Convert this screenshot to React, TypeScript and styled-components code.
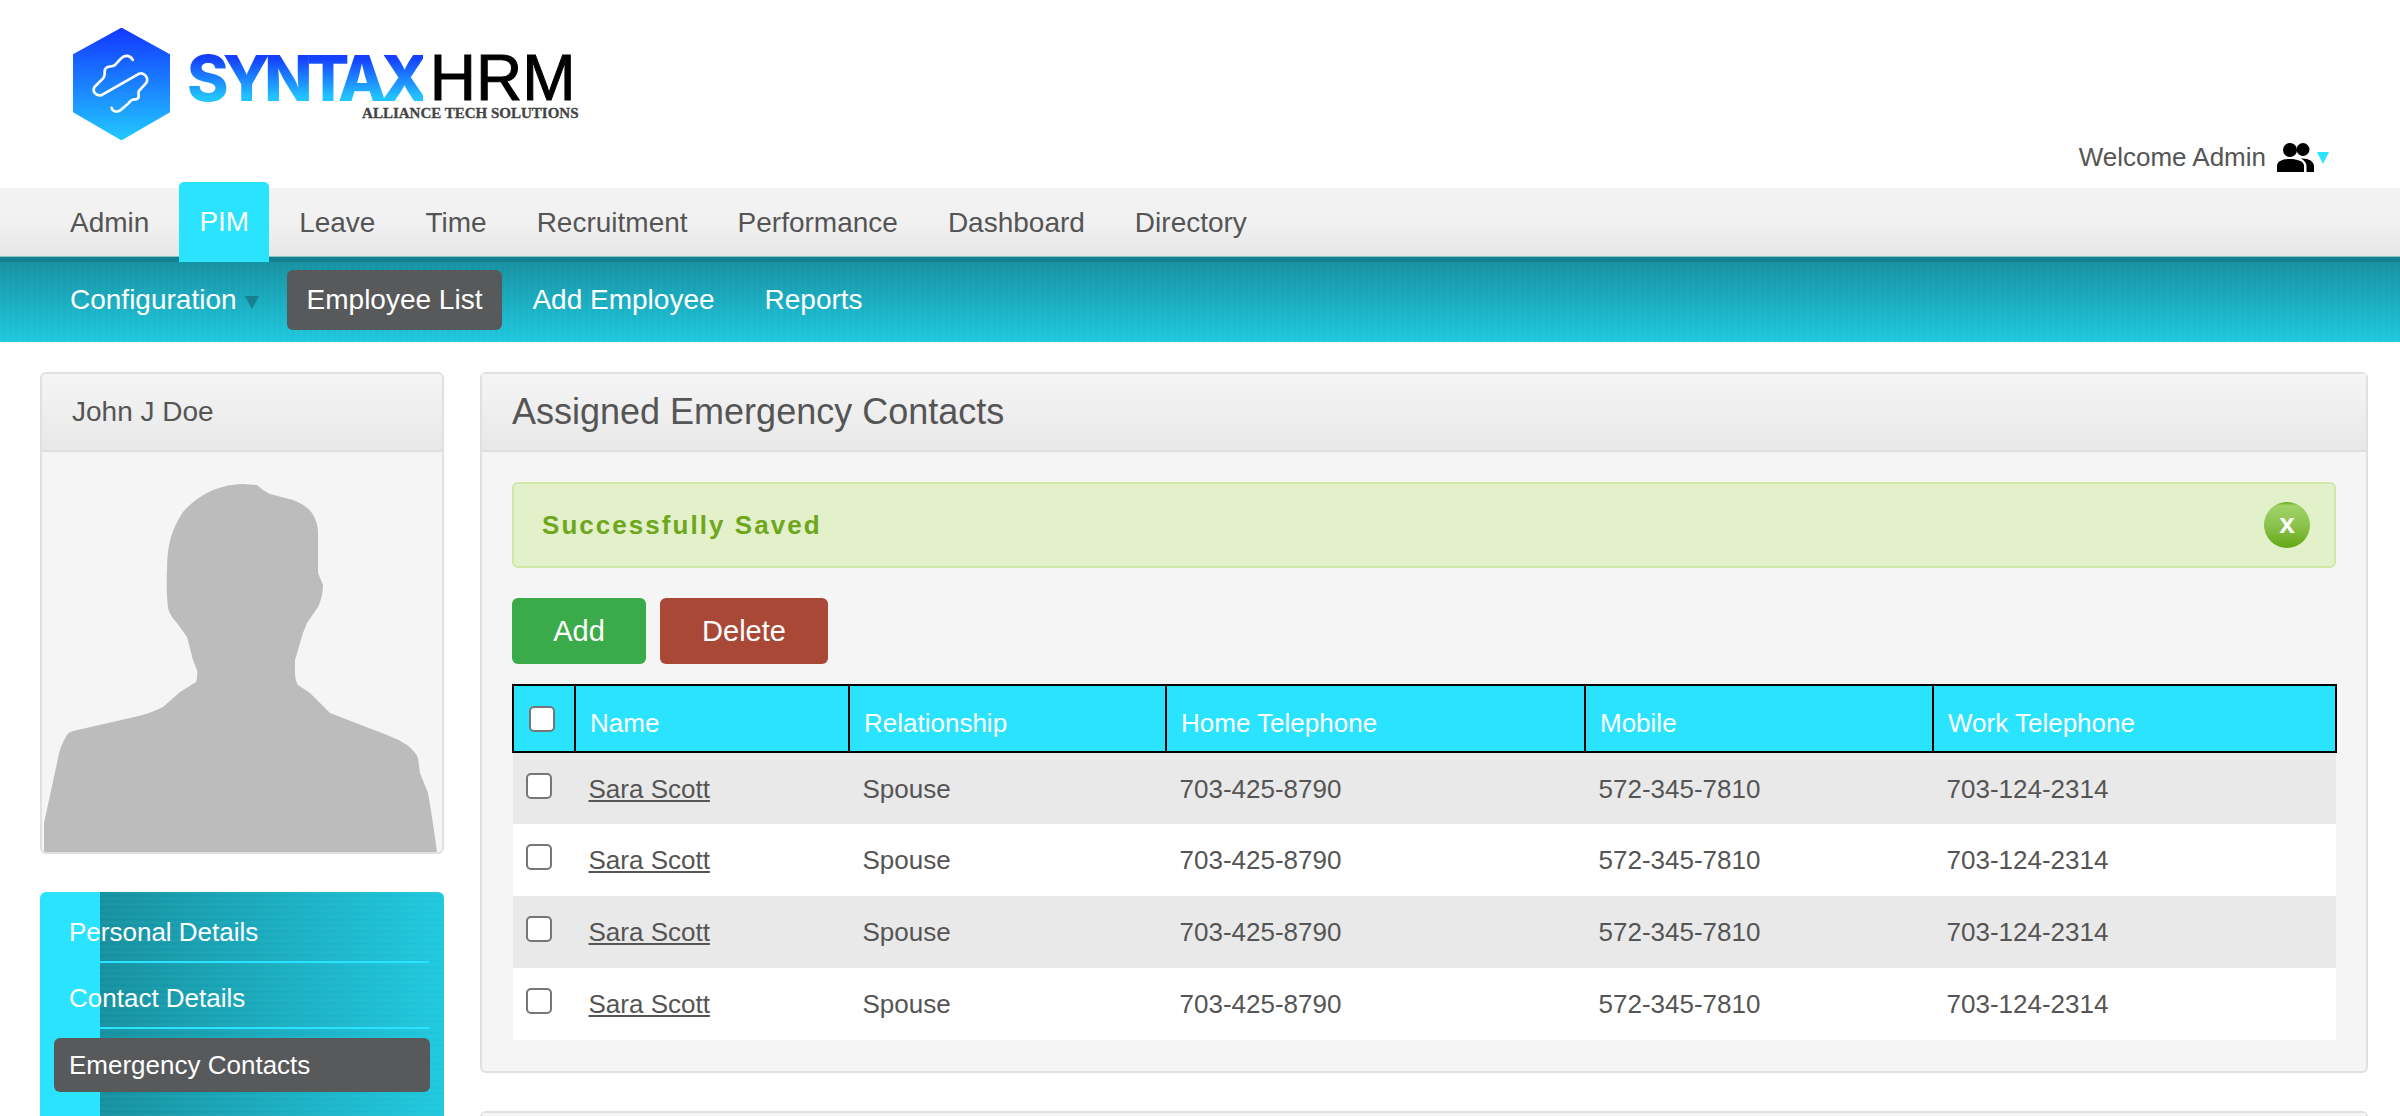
import styled, { createGlobalStyle } from 'styled-components';

const tabs = ['Admin', 'PIM', 'Leave', 'Time', 'Recruitment', 'Performance', 'Dashboard', 'Directory'];
const contacts = [1, 2, 3, 4];

const GlobalStyle = createGlobalStyle`
    html, body {
        margin: 0;
        background: #fff;
        font-family: "Liberation Sans", Arial, sans-serif;
        color: #555;
    }
    * {
        box-sizing: border-box;
    }
`;

const Page = styled.div`
    height: 100vh;
    overflow: hidden;
`;

const Header = styled.header`
    height: 188px;
    display: flex;
    justify-content: space-between;
    padding: 28px 73px 0 73px;
`;

const Logo = styled.div`
    display: flex;
    gap: 17px;
    height: 112px;
`;

const LogoText = styled.div`
    padding-top: 22px;
    display: flex;
    flex-direction: column;
`;

const LogoName = styled.div`
    display: flex;
    font-size: 63px;
    line-height: 56px;
`;

const Syntax = styled.span`
    font-family: Inter, "Liberation Sans", sans-serif;
    font-weight: 800;
    letter-spacing: -5.8px;
    margin-right: 7px;
    background: linear-gradient(180deg, #1540ff 15%, #22c4ff 85%);
    -webkit-background-clip: text;
    background-clip: text;
    color: transparent;
`;

const Hrm = styled.span`
    color: #000;
    font-size: 64px;
    -webkit-text-stroke: 1px #000;
`;

const Tagline = styled.div`
    align-self: flex-end;
    margin: 0 -3px 0 0;
    font-family: "Liberation Serif", serif;
    font-size: 15px;
    line-height: 14px;
    font-weight: 700;
    letter-spacing: 0;
    color: #444;
    -webkit-text-stroke: 0.3px #444;
`;

const Welcome = styled.div`
    display: flex;
    align-items: center;
    height: 30px;
    margin-top: 114px;
    font-size: 26px;
    color: #555;
`;

const PeopleIcon = styled.svg`
    width: 37px;
    height: 29px;
    margin-left: 11px;
`;

const WelcomeCaret = styled.span`
    width: 0;
    height: 0;
    margin: 2px -2px 0 3px;
    border-left: 6px solid transparent;
    border-right: 6px solid transparent;
    border-top: 12px solid #29e3ff;
`;

const MainNav = styled.nav`
    height: 74px;
    display: flex;
    padding-left: 45px;
    background: linear-gradient(180deg, #f3f3f3 0, #f1f1f1 34px, #e6e6e6 68px, #8fc4c9 68px, #8fc4c9 69px, #15808f 69px, #15808f 74px);
`;

const Tab = styled.div<{ $active?: boolean }>`
    height: ${p => (p.$active ? '80px' : '68px')};
    margin: ${p => (p.$active ? '-6px 5px 0' : '0 5px')};
    padding: ${p => (p.$active ? '7px 20px 0' : '1px 20px 0')};
    display: flex;
    align-items: ${p => (p.$active ? 'flex-start' : 'center')};
    line-height: ${p => (p.$active ? '66px' : 'normal')};
    font-size: 28px;
    color: ${p => (p.$active ? '#fff' : '#555')};
    background: ${p => (p.$active ? '#29e3ff' : 'transparent')};
    border-radius: ${p => (p.$active ? '5px 5px 0 0' : '0')};
    position: relative;
`;

const SubNav = styled.nav`
    height: 80px;
    padding: 8px 0 0 45px;
    display: flex;
    background:
        repeating-linear-gradient(90deg, rgba(255, 255, 255, 0.025) 0 3px, transparent 3px 6px),
        linear-gradient(180deg, #1691a2 0, #1ec8de 100%);
`;

const SubItem = styled.div<{ $active?: boolean }>`
    height: 60px;
    margin: 0 5px;
    padding: 0 20px;
    display: flex;
    align-items: center;
    font-size: 28px;
    color: #fff;
    background: ${p => (p.$active ? '#58595b' : 'transparent')};
    border-radius: 6px;
`;

const SubCaret = styled.span`
    width: 0;
    height: 0;
    margin: 4px -2px 0 8px;
    border-left: 7px solid transparent;
    border-right: 7px solid transparent;
    border-top: 13px solid #15808f;
`;

const Content = styled.main`
    display: flex;
    gap: 36px;
    padding: 30px 32px 0 40px;
`;

const Sidebar = styled.aside`
    width: 404px;
    flex: none;
    display: flex;
    flex-direction: column;
    gap: 38px;
`;

const ProfileCard = styled.section`
    border: 2px solid #e0e0e0;
    border-radius: 6px;
    overflow: hidden;
    background: #f5f5f5;
`;

const CardHead = styled.div`
    height: 78px;
    padding-left: 30px;
    display: flex;
    align-items: center;
    font-size: 28px;
    color: #555;
    background: linear-gradient(180deg, #f5f5f5, #e8e8e8);
    border-bottom: 2px solid #e0e0e0;
`;

const Avatar = styled.svg`
    display: block;
    width: 400px;
    height: 400px;
`;

const SideMenu = styled.div`
    height: 320px;
    padding: 7px 14px;
    border-radius: 6px 6px 0 0;
    background:
        linear-gradient(90deg, #29e3ff 0, #29e3ff 60px, transparent 60px),
        repeating-linear-gradient(0deg, rgba(255, 255, 255, 0.03) 0 3px, transparent 3px 6px),
        linear-gradient(90deg, #15909f 60px, #1fc8df 100%);
`;

const SideItem = styled.div<{ $active?: boolean }>`
    position: relative;
    height: ${p => (p.$active ? '54px' : '66px')};
    margin-top: ${p => (p.$active ? '7px' : '0')};
    padding-left: 15px;
    display: flex;
    align-items: center;
    font-size: 26px;
    color: #fff;
    background: ${p => (p.$active ? '#58595b' : 'transparent')};
    border-radius: 6px;

    ${p => !p.$active && `
        &::after {
            content: '';
            position: absolute;
            left: 46px;
            right: 0;
            bottom: 2px;
            height: 2px;
            background: #29e3ff;
            border-radius: 0 0 6px 0;
        }
    `}
`;

const MainColumn = styled.div`
    flex: 1;
    min-width: 0;
    display: flex;
    flex-direction: column;
    gap: 38px;
`;

const Panel = styled.section`
    border: 2px solid #e0e0e0;
    border-radius: 6px;
    background: #f5f5f5;
`;

const PanelHead = styled.div`
    height: 78px;
    padding-left: 30px;
    display: flex;
    align-items: center;
    font-size: 36px;
    color: #555;
    background: linear-gradient(180deg, #f5f5f5, #e8e8e8);
    border-bottom: 2px solid #e0e0e0;
`;

const PanelBody = styled.div`
    padding: 30px 30px 31px;
`;

const Alert = styled.div`
    height: 86px;
    padding: 0 24px 0 28px;
    display: flex;
    align-items: center;
    justify-content: space-between;
    background: #e2f1c9;
    border: 2px solid #cde9a5;
    border-radius: 6px;
    font-size: 26px;
    font-weight: 700;
    letter-spacing: 2.05px;
    color: #6ea61c;
`;

const AlertClose = styled.span`
    width: 46px;
    height: 46px;
    padding-bottom: 3px;
    display: flex;
    align-items: center;
    justify-content: center;
    border-radius: 50%;
    background: linear-gradient(180deg, #62a715 0, #a0d268 8%, #8cc44e 50%, #62a715 100%);
    color: #fff;
    font-size: 28px;
    letter-spacing: 0;
`;

const Actions = styled.div`
    display: flex;
    gap: 14px;
    margin: 30px 0 20px;
`;

const ActionButton = styled.button<{ $width: number; $color: string }>`
    width: ${p => p.$width}px;
    height: 66px;
    border: 0;
    border-radius: 6px;
    background: ${p => p.$color};
    color: #fff;
    font-family: inherit;
    font-size: 29px;
`;

const Table = styled.table`
    width: 1823px;
    table-layout: fixed;
    border-collapse: collapse;
    font-size: 26px;
`;

const Th = styled.th`
    height: 67px;
    padding: 10px 0 0 14px;
    text-align: left;
    font-weight: 400;
    color: #fff;
    background: #29e3ff;
    border: 2px solid #000;
`;

const CheckTh = styled(Th)`
    padding: 0 0 0 15px;
    vertical-align: middle;
`;

const Row = styled.tr`
    height: 72px;

    &:nth-child(odd) {
        background: #e9e9e9;
    }
    &:nth-child(even) {
        background: #fff;
    }
`;

const Td = styled.td`
    padding: 1px 0 0 13.5px;
    color: #555;
`;

const CheckTd = styled.td`
    padding: 20px 0 0 13px;
    vertical-align: top;
`;

const Check = styled.input.attrs({ type: 'checkbox' })`
    appearance: none;
    display: block;
    width: 26px;
    height: 26px;
    margin: 0;
    border: 2px solid #767676;
    border-radius: 5px;
    background: #fff;
`;

const NameLink = styled.a`
    color: #555;
    text-decoration: underline;
`;

const LogoMark = () => (
    <svg width="97" height="112" viewBox="70 55 292 335">
        <defs>
            <linearGradient id="hex" x1="0" y1="0" x2="0" y2="1">
                <stop offset="0" stopColor="#1238ff" />
                <stop offset="1" stopColor="#22c8ff" />
            </linearGradient>
        </defs>
        <path
            d="M216 55 L362 135 L362 305 L216 390 L70 305 L70 135 Z"
            fill="url(#hex)"
            stroke="url(#hex)"
            strokeWidth="4"
            strokeLinejoin="round"
        />
        <path
            d="M250 150 C242 135 226 134 214 146 L196 166 C186 172 176 168 170 174 C160 180 170 192 162 204 L136 230 C126 244 138 260 156 256 L268 192 C284 186 300 204 290 220 L268 244 C264 256 274 262 262 268 C250 270 246 268 238 280 L212 302 C200 310 188 304 186 294"
            fill="none"
            stroke="#fff"
            strokeWidth="8"
            strokeLinecap="round"
            strokeLinejoin="round"
        />
    </svg>
);

const App = () => {
    return (
        <Page>
            <GlobalStyle />
            <Header>
                <Logo>
                    <LogoMark />
                    <LogoText>
                        <LogoName>
                            <Syntax>SYNTAX</Syntax>
                            <Hrm>HRM</Hrm>
                        </LogoName>
                        <Tagline>ALLIANCE TECH SOLUTIONS</Tagline>
                    </LogoText>
                </Logo>
                <Welcome>
                    Welcome Admin
                    <PeopleIcon viewBox="0 0 37 29">
                        <circle cx="13" cy="7" r="7" />
                        <circle cx="26" cy="6.5" r="6.5" />
                        <path d="M0 29 V23 C0 18 6 16 13 16 C20 16 27 18 27 23 V29 Z" />
                        <path d="M24 15.5 C31 15 37 18 37 23 V29 H29.5 V23 C29.5 20 27.5 17.5 24 15.5 Z" />
                    </PeopleIcon>
                    <WelcomeCaret />
                </Welcome>
            </Header>

            <MainNav>
                {tabs.map(tab => (
                    <Tab key={tab} $active={tab === 'PIM'}>{tab}</Tab>
                ))}
            </MainNav>
            <SubNav>
                <SubItem>Configuration<SubCaret /></SubItem>
                <SubItem $active>Employee List</SubItem>
                <SubItem>Add Employee</SubItem>
                <SubItem>Reports</SubItem>
            </SubNav>

            <Content>
                <Sidebar>
                    <ProfileCard>
                        <CardHead>John J Doe</CardHead>
                        <Avatar viewBox="42 452 400 400">
                            <path
                                fill="#bcbcbc"
                                d="M44 852 V823 L57 763 Q60 745 67 735 Q69 732 73 731 L130 718 Q150 714 163 707 L180 692 L196 682 Q198 675 197 670 L193 660 L187 637 L177 623 Q170 616 168 608 Q166 590 167 570 Q167 550 171 537 Q175 524 183 512 Q195 498 213 490 Q228 484 243 484 L257 485 Q262 490 270 494 L293 500 Q306 505 312 513 Q318 522 318 533 L318 573 L323 585 Q323 596 318 607 L307 623 L303 633 L295 660 L295 673 Q295 680 298 685 L310 693 L330 713 L387 735 Q398 739 407 745 Q415 751 418 758 L420 773 L428 793 Q432 815 437 852 Z"
                            />
                        </Avatar>
                    </ProfileCard>
                    <SideMenu>
                        <SideItem>Personal Details</SideItem>
                        <SideItem>Contact Details</SideItem>
                        <SideItem $active>Emergency Contacts</SideItem>
                    </SideMenu>
                </Sidebar>

                <MainColumn>
                    <Panel>
                        <PanelHead>Assigned Emergency Contacts</PanelHead>
                        <PanelBody>
                            <Alert>
                                Successfully Saved
                                <AlertClose>x</AlertClose>
                            </Alert>
                            <Actions>
                                <ActionButton $width={134} $color="#3bab4a">Add</ActionButton>
                                <ActionButton $width={168} $color="#a94836">Delete</ActionButton>
                            </Actions>
                            <Table>
                                <colgroup>
                                    <col width="62" />
                                    <col width="274" />
                                    <col width="317" />
                                    <col width="419" />
                                    <col width="348" />
                                    <col width="403" />
                                </colgroup>
                                <thead>
                                    <tr>
                                        <CheckTh><Check /></CheckTh>
                                        <Th>Name</Th>
                                        <Th>Relationship</Th>
                                        <Th>Home Telephone</Th>
                                        <Th>Mobile</Th>
                                        <Th>Work Telephone</Th>
                                    </tr>
                                </thead>
                                <tbody>
                                    {contacts.map(id => (
                                        <Row key={id}>
                                            <CheckTd><Check /></CheckTd>
                                            <Td><NameLink>Sara Scott</NameLink></Td>
                                            <Td>Spouse</Td>
                                            <Td>703-425-8790</Td>
                                            <Td>572-345-7810</Td>
                                            <Td>703-124-2314</Td>
                                        </Row>
                                    ))}
                                </tbody>
                            </Table>
                        </PanelBody>
                    </Panel>
                    <Panel>
                        <PanelHead />
                    </Panel>
                </MainColumn>
            </Content>
        </Page>
    );
};

export default App;
